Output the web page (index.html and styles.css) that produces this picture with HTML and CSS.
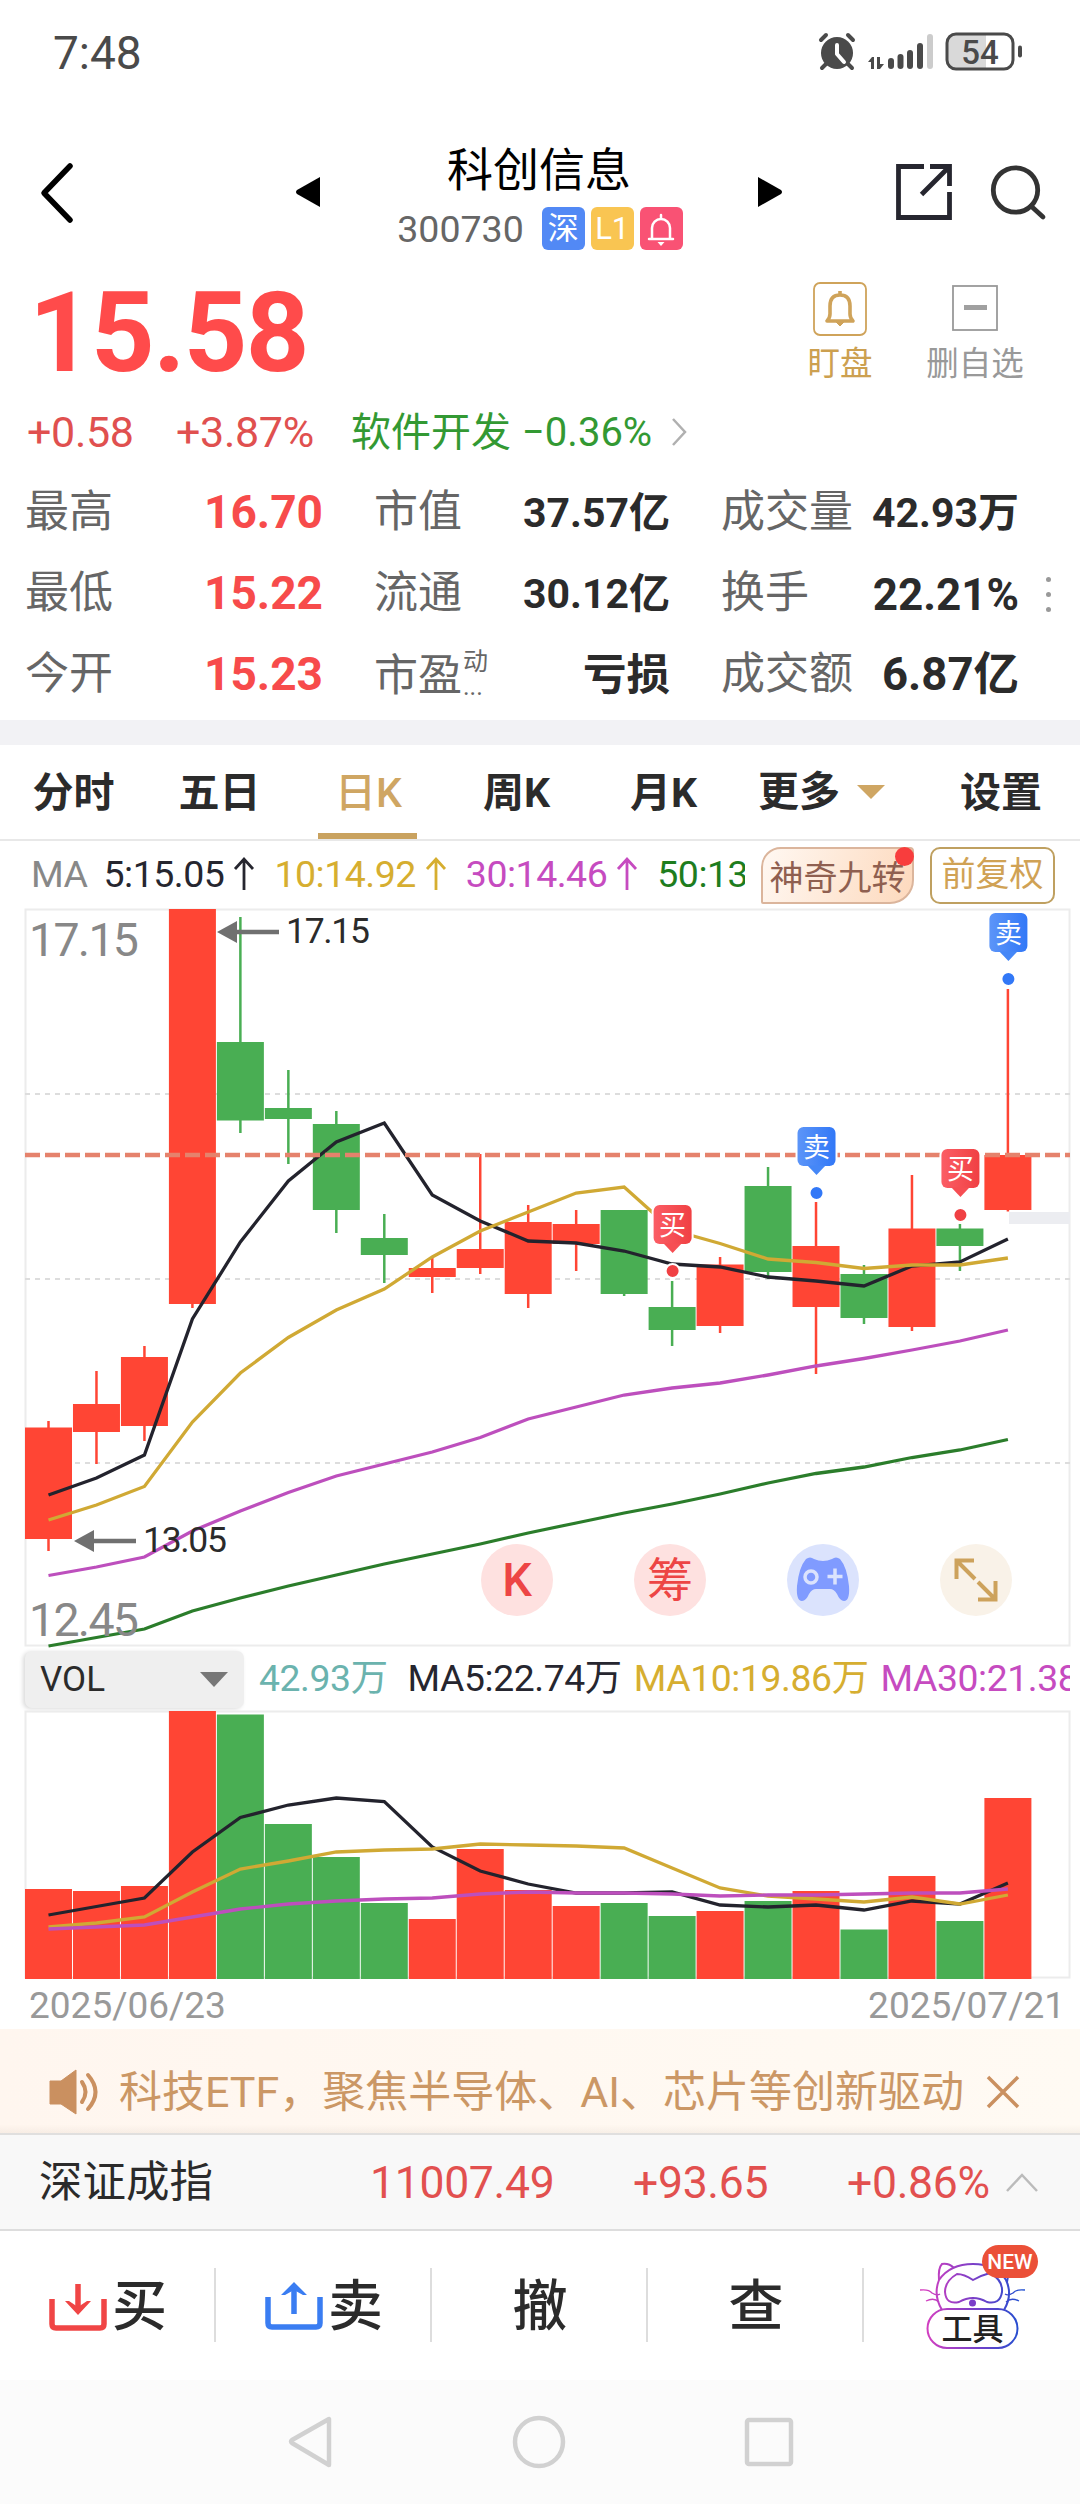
FILE: index.html
```html
<!DOCTYPE html>
<html lang="zh-CN">
<head>
  <meta charset="UTF-8" />
  <meta name="viewport" content="width=device-width, initial-scale=1.0" />
  <title>科创信息 300730</title>
  <link rel="stylesheet" href="styles.css">
</head>
<body>
  <div class="status-bar">
    <span class="clock">7:48</span>
    <svg class="status-icons" width="210" height="50" viewBox="0 0 210 50">
      <g stroke="#4a4a4a" stroke-width="4" stroke-linecap="round" fill="none">
        <path d="M11 12l5-5M38 7l5 5M17 35l-5 5M37 35l5 5"/>
      </g>
      <circle cx="27" cy="25" r="16" fill="#4a4a4a"/>
      <path d="M27 17v9l7 8" stroke="#fff" stroke-width="4" stroke-linecap="round" stroke-linejoin="round" fill="none"/>
      <path d="M58 34l4-5h2v12h-3v-7zM67 29h3v7h4l-4 5h-3z" fill="#4a4a4a"/>
      <g fill="#4a4a4a">
        <rect x="78" y="30" width="6" height="11" rx="3"/>
        <rect x="87.500" y="26" width="6" height="15" rx="3"/>
        <rect x="97" y="22" width="6" height="19" rx="3"/>
        <rect x="107" y="15" width="6" height="26" rx="3"/>
        <rect x="117" y="6" width="6" height="35" rx="3" fill="#ccc"/>
      </g>
      <path d="M145 6h31v35h-31q-8 0-8-8v-19q0-8 8-8z" fill="#d9d9d9"/>
      <rect x="137" y="6" width="66" height="35" rx="9" fill="none" stroke="#4a4a4a" stroke-width="3"/>
      <rect x="208" y="17.500" width="4" height="12" rx="2" fill="#4a4a4a"/>
      <text x="170" y="36" class="battery-text">54</text>
    </svg>
  </div>

  <header class="app-header">
    <svg class="back" width="40" height="64" viewBox="0 0 40 64"><path d="M34 6L8 33l26 27" fill="none" stroke="#000" stroke-width="5.500" stroke-linecap="round" stroke-linejoin="round"/></svg>
    <svg class="tri" width="24" height="30" viewBox="0 0 24 30"><path d="M24 0v30L1 17q-2-2 0-4z"/></svg>
    <div class="title-block">
      <h1>科创信息</h1>
      <div class="code-row">
        <span class="code">300730</span>
        <i class="tag tag-blue">深</i>
        <i class="tag tag-gold">L1</i>
        <i class="tag tag-pink">
          <svg width="32" height="36" viewBox="0 0 32 36"><path d="M16 4v3M4 28h24M7 27V17a9 9 0 0 1 18 0v10" fill="none" stroke="#fff" stroke-width="2.500" stroke-linecap="round"/><path d="M12.500 31h7l-3.500 4z" fill="#fff"/></svg>
        </i>
      </div>
    </div>
    <svg class="tri" width="24" height="30" viewBox="0 0 24 30"><path d="M0 0v30l23-13q2-2 0-4z"/></svg>
    <div class="header-icons">
      <svg width="56" height="56" viewBox="0 0 56 56" fill="none" stroke="#26262f" stroke-width="4.800"><path d="M28 2.500H2.500v51h51V28M34 2.500h19.500V22M52 4L25.500 30.500"/></svg>
      <svg width="56" height="56" viewBox="0 0 56 56" fill="none" stroke="#333" stroke-width="4.800"><circle cx="25.500" cy="26" r="22.200"/><path d="M41 42l12 11" stroke-linecap="round"/></svg>
    </div>
  </header>

  <section class="quote">
    <div class="price-row">
      <div class="price">15.58</div>
      <div class="action watch">
        <svg width="54" height="54" viewBox="0 0 54 54" fill="none" stroke="#cfa35a"><rect x="1" y="1" width="52" height="52" rx="6" stroke-width="1.800"/><path d="M27 9v3M14 39q3-3 3-7v-8q0-11 10-11t10 11v8q0 4 3 7z" stroke-width="3.600" stroke-linejoin="round"/><path d="M23 40h8l-4 4z" fill="#cfa35a" stroke-width="1"/></svg>
        <span>盯盘</span>
      </div>
      <div class="action remove">
        <svg width="46" height="54" viewBox="0 0 46 54"><rect x="1" y="4" width="44" height="44" fill="none" stroke="#999" stroke-width="1.800"/><path d="M12 25.500h23" stroke="#a0a0a0" stroke-width="5"/></svg>
        <span>删自选</span>
      </div>
    </div>
    <div class="change-row">
      <span class="up">+0.58</span>
      <span class="up pct">+3.87%</span>
      <span class="sector">软件开发</span>
      <span class="sector-pct">−0.36%</span>
      <svg width="18" height="30" viewBox="0 0 18 30"><path d="M3 2l12 13L3 28" fill="none" stroke="#b0b0b0" stroke-width="2.500"/></svg>
    </div>
    <div class="stats-wrap">
      <div class="stats">
        <div class="stat"><span>最高</span><b class="red">16.70</b></div>
        <div class="stat"><span>市值</span><b>37.57亿</b></div>
        <div class="stat"><span>成交量</span><b>42.93万</b></div>
        <div class="stat"><span>最低</span><b class="red">15.22</b></div>
        <div class="stat"><span>流通</span><b>30.12亿</b></div>
        <div class="stat"><span>换手</span><b class="pct-val">22.21%</b></div>
        <div class="stat"><span>今开</span><b class="red">15.23</b></div>
        <div class="stat"><span class="pe">市盈<em><small>动</small><small>...</small></em></span><b class="cjk">亏损</b></div>
        <div class="stat"><span>成交额</span><b class="big">6.87亿</b></div>
      </div>
      <div class="dots"><i></i><i></i><i></i></div>
    </div>
  </section>

  <nav class="tabs">
    <a>分时</a>
    <a>五日</a>
    <a class="active">日K</a>
    <a>周K</a>
    <a>月K</a>
    <a class="more">更多<i></i></a>
    <a>设置</a>
  </nav>

  <div class="ma-row">
    <div class="ma-list">
      <span class="c-gray">MA</span>
      <span class="c-black">5:15.05<svg width="22" height="34" viewBox="0 0 22 34"><path d="M11 33V3M2 12l9-10 9 10"/></svg></span>
      <span class="c-gold">10:14.92<svg width="22" height="34" viewBox="0 0 22 34"><path d="M11 33V3M2 12l9-10 9 10"/></svg></span>
      <span class="c-purple">30:14.46<svg width="22" height="34" viewBox="0 0 22 34"><path d="M11 33V3M2 12l9-10 9 10"/></svg></span>
      <span class="c-green">50:13</span>
    </div>
    <div class="chip nine">神奇九转</div>
    <div class="chip adjust">前复权</div>
  </div>

  <div class="chart-box">
    <svg id="kline" width="1080" height="740" viewBox="0 908 1080 740"></svg>
    <div class="float-buttons">
      <span class="fb red-fb">K</span>
      <span class="fb red-fb chip-fb">筹</span>
      <span class="fb blue-fb">
        <svg width="54" height="48" viewBox="0 0 54 48"><path d="M10 3q4-3 8 0 9 4 18 0 4-3 8 0 7 8 9 27 1 15-5 15-4 0-7-7-3-5-7-5H20q-4 0-7 5-3 7-7 7-6 0-5-15Q3 11 10 3z" fill="#809bff"/><circle cx="15" cy="21" r="6" fill="none" stroke="#dbe3fd" stroke-width="3.500"/><path d="M39 12.500v16M31.500 20.500h15" stroke="#dbe3fd" stroke-width="3.500"/></svg>
      </span>
      <span class="fb gold-fb">
        <svg width="46" height="46" viewBox="0 0 46 46" fill="none" stroke="#cda25c" stroke-width="4"><path d="M3.500 22V3.500H21M4 4l18 18M25 25l17 17M42.500 24v18.500H25"/></svg>
      </span>
    </div>
  </div>

  <div class="vol-row">
    <div class="vol-select">VOL<i></i></div>
    <div class="vol-list">
      <span class="c-teal">42.93万</span>
      <span class="c-black">MA5:22.74万</span>
      <span class="c-gold">MA10:19.86万</span>
      <span class="c-purple">MA30:21.38</span>
    </div>
  </div>
  <svg id="volume" width="1080" height="270" viewBox="0 1710 1080 270"></svg>
  <div class="dates"><span>2025/06/23</span><span>2025/07/21</span></div>

  <div class="notice">
    <svg width="54" height="48" viewBox="0 0 54 48"><path d="M1 13h11L27 2v44L12 36H1z" fill="#ca9060" stroke="#ca9060" stroke-linejoin="round"/><path d="M33 14q7 10 0 20M39 7q15 17 0 34" fill="none" stroke="#ca9060" stroke-width="4" stroke-linecap="round"/></svg>
    <span>科技ETF，聚焦半导体、AI、芯片等创新驱动</span>
    <svg class="close" width="34" height="34" viewBox="0 0 34 34"><path d="M2 2l30 30M32 2L2 32" stroke="#ca9060" stroke-width="3.500"/></svg>
  </div>

  <div class="index-bar">
    <span class="index-name">深证成指</span>
    <span class="index-val">11007.49</span>
    <span class="index-diff">+93.65</span>
    <span class="index-pct">+0.86%</span>
    <svg width="34" height="20" viewBox="0 0 34 20"><path d="M2 18L17 2l15 16" fill="none" stroke="#bbb" stroke-width="2.500"/></svg>
  </div>

  <div class="trade-bar">
    <div class="trade">
      <svg width="58" height="52" viewBox="0 0 58 52" fill="none" stroke="#f04545" stroke-width="5.500"><path d="M3 18v25q0 4 4 4h44q4 0 4-4V18"/><path d="M29 3v26"/><path d="M16 20h4l9 6 9-6h4L29 34z" fill="#f04545" stroke="none"/></svg>买
    </div>
    <div class="trade">
      <svg width="58" height="52" viewBox="0 0 58 52" fill="none" stroke="#3a7df2" stroke-width="5.500"><path d="M3 16v26q0 4 4 4h44q4 0 4-4V16"/><path d="M29 33V6"/><path d="M16 14L29 1l13 13h-4l-9-5-9 5z" fill="#3a7df2" stroke="none"/></svg>卖
    </div>
    <div class="trade">撤</div>
    <div class="trade">查</div>
    <div class="trade">
      <svg class="cat" width="124" height="110" viewBox="0 0 124 110">
        <defs>
          <linearGradient id="catLine" gradientUnits="userSpaceOnUse" x1="8" y1="0" x2="104" y2="0">
            <stop offset="0" stop-color="#d43fc0"/><stop offset=".5" stop-color="#7a3fc8"/><stop offset="1" stop-color="#1f4fd0"/>
          </linearGradient>
        </defs>
        <g fill="none" stroke="url(#catLine)" stroke-width="2">
          <path d="M21 34q-1-12 3-16 7-1 12 4M77 23q8-6 12-3 2 7 0 16"/>
          <path d="M24 64q-9-15-3-30 11-16 34-16t33 16q7 15-2 30"/>
          <path d="M39 28q-12 7-12 18 1 13 14 10 14-8 28 0 13 3 15-10 1-12-12-19-8 2-17 7-9-6-16-6z"/>
          <path d="M2 44q9-1 12 3 5 3 8 1M8 55q8-4 13 1M107 44q-9-1-12 3-5 3-8 1M101 55q-8-4-13 1" stroke-width="1.300"/>
          <rect x="9.500" y="63" width="90" height="39" rx="19.500" fill="#fff"/>
        </g>
        <circle cx="54.500" cy="57" r="3.500" fill="#7a3fc8"/>
        <text x="54.500" y="94" class="cat-text">工具</text>
        <rect x="64" y="-1" width="56" height="33" rx="16.500" fill="#eb5038"/>
        <text x="92" y="23" class="new-text">NEW</text>
      </svg>
    </div>
  </div>

  <div class="nav-bar">
    <svg width="48" height="54" viewBox="0 0 48 54"><path d="M43 4v46L6 28q-2-1.500 0-3z"/></svg>
    <svg width="54" height="54" viewBox="0 0 54 54"><circle cx="27" cy="27" r="24"/></svg>
    <svg width="50" height="54" viewBox="0 0 50 54"><rect x="3" y="5" width="44" height="44" rx="2"/></svg>
  </div>

<script>
const RED = '#ff4534', GREEN = '#49ae53';
const STEP = 47.97, LEFT = 25, BAR = 47;
const midX = i => LEFT + 23.5 + STEP * i;

// color, body top, body bottom, high, low, volume top
const candles = [
  ['r', 1427.5, 1539, 1421, 1551, 1889],
  ['r', 1404, 1432, 1371, 1464, 1891],
  ['r', 1357, 1426, 1346, 1441, 1886],
  ['r', 909, 1304, 909, 1308, 1711],
  ['g', 1042, 1120.5, 917, 1133, 1714.5],
  ['g', 1108, 1119, 1070, 1164, 1824],
  ['g', 1124, 1210, 1111, 1233, 1857],
  ['g', 1238, 1255, 1214, 1283, 1903],
  ['r', 1268, 1277, 1257, 1293, 1919],
  ['r', 1249, 1268, 1154, 1274, 1849],
  ['r', 1222, 1294, 1205, 1308, 1890],
  ['r', 1224, 1244, 1210, 1271, 1906],
  ['g', 1210, 1294, 1210, 1296, 1903],
  ['g', 1307, 1330, 1281, 1346, 1916],
  ['r', 1264.5, 1326, 1257, 1333, 1911],
  ['g', 1186, 1272, 1167, 1279, 1901],
  ['r', 1246, 1307, 1202, 1374, 1891],
  ['g', 1274, 1318, 1265, 1324, 1929.5],
  ['r', 1228.5, 1327, 1175, 1331, 1876],
  ['g', 1228.5, 1246, 1224, 1271, 1921],
  ['r', 1155, 1210, 989, 1211.5, 1798]
];

const priceLines = {
  '#23232d': [1495, 1478, 1455, 1319, 1242, 1181, 1142, 1123, 1195, 1221, 1241, 1243, 1251, 1264, 1267, 1277, 1281, 1286, 1266, 1262, 1239],
  '#d0a934': [1520, 1505, 1486.5, 1422, 1373, 1337.5, 1310, 1289, 1257, 1231, 1212, 1193, 1187, 1230, 1243.5, 1259, 1262.5, 1268.5, 1265, 1265, 1258],
  '#bd4fbd': [1575.5, 1567, 1557, 1531, 1511, 1492.5, 1476, 1464, 1452, 1437.5, 1419, 1407, 1395, 1388, 1383, 1375, 1366, 1358.5, 1350, 1341, 1330],
  '#2b7d2b': [1646, 1637.5, 1629, 1611, 1598, 1586, 1575, 1564, 1554, 1544, 1533, 1523, 1513, 1504, 1494, 1483, 1473.5, 1467, 1457.5, 1450, 1439.5]
};
const volLines = {
  '#23232d': [1915, 1906.5, 1898, 1852, 1817.5, 1805, 1798, 1801.5, 1847, 1871, 1884, 1893, 1893, 1892, 1905, 1907, 1905, 1910, 1901, 1904, 1883],
  '#d0a934': [1927, 1923, 1917, 1892, 1869, 1861, 1852, 1850, 1849, 1844, 1845, 1846, 1848, 1868, 1888, 1896, 1899, 1902, 1897, 1904, 1895],
  '#bd4fbd': [1929, 1927, 1925, 1917, 1909, 1904, 1901, 1899, 1898, 1894, 1892, 1893, 1893, 1894, 1896, 1895, 1895, 1894, 1893, 1893, 1889]
};
const marks = [[13, 1205, '买'], [16, 1127, '卖'], [19, 1149, '买'], [20, 913, '卖']];

function drawLines(set) {
  return Object.entries(set).map(([color, ys]) =>
    `<polyline class="ma-line" stroke="${color}" points="${ys.map((y, i) => midX(i) + ',' + y).join(' ')}"/>`).join('');
}

function arrow(x, y, label) {
  return `<path d="M${x} ${y}l20-11v22z" fill="#707070"/>
    <path d="M${x + 18} ${y}h44" stroke="#707070" stroke-width="4.500"/>
    <text x="${x + 69}" y="${y + 11}" class="mark-price">${label}</text>`;
}

function drawKline() {
  let s = `<defs>
    <linearGradient id="sell"><stop offset="0" stop-color="#5c95f8"/><stop offset="1" stop-color="#3278f7"/></linearGradient>
    <linearGradient id="buy"><stop offset="0" stop-color="#fb5d65"/><stop offset="1" stop-color="#f04043"/></linearGradient></defs>
    <rect x="25.5" y="909.500" width="1044" height="736" class="frame"/>`;
  for (const y of [1094, 1279, 1463]) s += `<path d="M25 ${y}H1070" class="grid-line"/>`;
  s += '<rect x="1009" y="1212" width="61" height="12" fill="#ecedf1"/>';
  candles.forEach(([c, top, bottom, high, low], i) => {
    const color = c === 'r' ? RED : GREEN;
    s += `<path d="M${midX(i)} ${high}V${low}" stroke="${color}" stroke-width="2.500"/>
      <rect x="${LEFT + STEP * i}" y="${top}" width="${BAR}" height="${bottom - top}" fill="${color}"/>`;
  });
  s += drawLines(priceLines);
  s += '<path d="M25 1155H1070" class="last-line"/>';
  s += arrow(217, 932, '17.15') + arrow(74, 1541, '13.05');
  s += '<text x="29" y="956" class="axis">17.15</text><text x="29" y="1636" class="axis">12.45</text>';
  marks.forEach(([i, y, t]) => {
    const x = midX(i) + .5, fill = t === '卖' ? 'sell' : 'buy';
    s += `<rect x="${x - 21}" y="${y - 2}" width="42" height="43" rx="8" fill="#fff"/>
      <rect x="${x - 19}" y="${y}" width="38" height="39" rx="6" fill="url(#${fill})"/>
      <path d="M${x - 9} ${y + 38.500}h18l-9 9.500z" fill="${t === '卖' ? '#4587f7' : '#f64e53'}"/>
      <circle cx="${x}" cy="${y + 66}" r="7" fill="${t === '卖' ? '#3278f7' : '#f04043'}" stroke="#fff" stroke-width="2"/>
      <text x="${x}" y="${y + 30}" class="mark-text">${t}</text>`;
  });
  document.getElementById('kline').innerHTML = s;
}

function drawVolume() {
  let s = '<rect x="25.5" y="1711.500" width="1044" height="266" class="frame"/>';
  candles.forEach((k, i) => {
    s += `<rect x="${LEFT + STEP * i}" y="${k[5]}" width="${BAR}" height="${1979 - k[5]}" fill="${k[0] === 'r' ? RED : GREEN}"/>`;
  });
  document.getElementById('volume').innerHTML = s + drawLines(volLines);
}

drawKline();
drawVolume();
</script>
</body>
</html>
```
FILE: styles.css
```css
*,*::before,*::after{box-sizing:border-box;margin:0;padding:0}
body{
  width:1080px;height:2504px;overflow:hidden;background:#fff;color:#2b2b2b;
  font-family:Roboto,"Noto Sans CJK SC",sans-serif;
}
svg{display:block;flex:none;overflow:visible}
i,em{font-style:normal}

.status-bar{height:110px;display:flex;justify-content:space-between;padding:28px 60px 0 53px}
.clock{font-size:46px;line-height:50px;color:#4a4a4a}
.battery-text{font-size:33px;font-weight:500;fill:#4a4a4a;text-anchor:middle}

.app-header{height:158px;display:grid;grid-template-columns:260px 96px 368px 92px 1fr;align-items:center;padding-top:5px}
.back{margin-left:36px}
.tri{justify-self:center}
.title-block{display:flex;flex-direction:column;align-items:center;padding-top:10px}
.title-block h1{font-size:46px;font-weight:400;line-height:64px;color:#000;margin-left:-2px}
.code-row{display:flex;align-items:center;gap:6px;line-height:54px}
.code{font-size:37.5px;color:#666;margin-right:12px}
.tag{width:43px;height:43px;border-radius:6px;color:#fff;font-size:31px;line-height:43px;display:flex;align-items:center;justify-content:center}
.tag-blue{background:#5289f5}
.tag-gold{background:#f9c552}
.tag-pink{background:#f95274}
.header-icons{display:flex;gap:38px;padding-left:80px}

.quote{height:452px}
.price-row{height:132px;display:flex}
.price{width:806px;padding-left:29px;font-size:111px;line-height:130px;font-weight:700;letter-spacing:-1.6px;color:#ff4b4b}
.action{display:flex;flex-direction:column;align-items:center;padding-top:14px;font-size:32.500px;line-height:48px}
.action span{margin-top:4px}
.watch{width:68px;color:#cca050}
.remove{width:100px;margin-left:51px;color:#999}
.change-row{height:70px;display:flex;align-items:center;padding:0 0 7px 27px;font-size:43px;line-height:60px}
.up{width:149px;letter-spacing:-.3px;color:#e0504f}
.up.pct{width:175px}
.sector{width:171px;font-size:40px;padding-top:2px;color:#393}
.sector-pct{width:148px;font-size:40px;padding-top:2px;color:#393}
.stats-wrap{position:relative}
.stats{padding:2px 0 0 25px;display:grid;grid-template-columns:298px 296px 298px;column-gap:51px;grid-auto-rows:81px}
.stat{display:flex;justify-content:space-between;align-items:center;line-height:81px;white-space:nowrap}
.stat span{font-size:44px;color:#666}
.stat b{font-size:41px;padding-top:2px}
.stat b.red{font-size:46px;padding-top:0;color:#f74b4b}
.stat b.pct-val{font-size:44px;padding-top:4px}
.stat b.cjk{font-size:43.5px}
.stat b.big{font-size:45.5px;padding-top:0}
.pe{display:flex;padding-top:4px}
.pe em{display:flex;flex-direction:column;padding:13px 0 0 1px}
.pe small{font-size:25px;line-height:25px}
.dots{position:absolute;right:29px;top:107px;display:flex;flex-direction:column;gap:10px}
.dots i{width:5px;height:5px;border-radius:50%;background:#999}

.tabs{height:121px;border-top:25px solid #f2f2f5;border-bottom:2px solid #e8e8e8;display:flex;line-height:96px;font-size:41px;font-weight:700;white-space:nowrap}
.tabs a{position:relative;width:147px;text-align:center}
.tabs a:nth-child(2){width:145px}
.tabs a:nth-child(3){width:153px}
.tabs a:nth-child(4){width:143px}
.tabs a:nth-child(5){width:151px}
.tabs .active{color:#cfa663;font-weight:500}
.tabs .active::after{content:"";position:absolute;left:26px;bottom:0;width:99px;height:6px;background:#c9a25f}
.tabs .more{width:174px;display:flex;align-items:center;padding-left:19px}
.tabs .more i{margin-left:17px;border:14px solid transparent;border-top-color:#cfa663;border-bottom:0}
.tabs a:last-child{width:auto;margin-left:47px}

.ma-row{height:67px;padding:6px 0 0 31px;display:flex}
.ma-list{width:714px;overflow:hidden;display:flex;font-size:37.5px;letter-spacing:-.5px;line-height:54px;height:54px;white-space:nowrap}
.ma-list span{display:flex;align-items:center;margin-right:19px}
.ma-list span:first-child{margin-right:16px}
.ma-list svg{margin-left:9px;fill:none;stroke:currentColor;stroke-width:2.800}
.c-gray{color:#888}
.c-black{color:#26262f}
.c-gold{color:#d6ae30}
.c-purple{color:#c64bc0}
.c-green{color:#1e7d1e}
.c-teal{color:#6bb3ae}
.chip{position:relative;height:57px;font-size:34px;line-height:58px;text-align:center;white-space:nowrap}
.nine{margin-left:16px;width:153px;color:#8f5f50;border:2px solid #dbb59c;border-radius:20px 4px 24px 2px;background:linear-gradient(110deg,#fff8f2,#fdd9bd)}
.nine::after{content:"";position:absolute;right:-2px;top:-2px;width:19px;height:19px;border-radius:50%;background:#f83d3d}
.adjust{margin-left:16px;width:125px;line-height:50px;color:#d0a255;border:2.500px solid #bfa060;border-radius:10px}

.chart-box{position:relative;height:740px}
.frame{fill:none;stroke:#ececec;stroke-width:2}
.grid-line{stroke:#ddd;stroke-width:2;stroke-dasharray:5 5}
.last-line{stroke:#e5826c;stroke-width:4.500;stroke-dasharray:15 5}
.ma-line{fill:none;stroke-width:3.300}
.axis{font-size:46.500px;letter-spacing:-1.700px;fill:#888}
.mark-price{font-size:35.500px;letter-spacing:-1.300px;fill:#2b2b2b}
.mark-text{font-size:27px;fill:#fff;text-anchor:middle}
.float-buttons{position:absolute;left:481px;top:636px;display:flex;gap:81px}
.fb{width:72px;height:72px;border-radius:50%;display:flex;align-items:center;justify-content:center;font-size:47px;line-height:72px}
.red-fb{background:#fee1e0;color:#ed4545;font-weight:500}
.chip-fb{font-size:46px;font-weight:400;line-height:76px}
.blue-fb{background:#dbe3fd}
.gold-fb{background:#f9f2e8}

.vol-row{height:62px;padding:3px 10px 0 25px;display:flex}
.vol-select{width:219px;height:57px;flex:none;padding:0 16px 0 15px;display:flex;align-items:center;justify-content:space-between;font-size:35px;line-height:60px;background:#efefef;border-radius:7px;box-shadow:-2px 1px 4px rgba(0,0,0,.15)}
.vol-select i{border:14px solid transparent;border-top:15px solid #777;border-bottom:0}
.vol-list{overflow:hidden;display:flex;gap:20px;padding-left:15px;font-size:37.300px;letter-spacing:-.400px;line-height:55px;white-space:nowrap}
.vol-list span + span + span{margin-left:-8px}
.dates{height:49px;display:flex;justify-content:space-between;padding:0 15px 0 29px;font-size:37px;line-height:52px;color:#999}

.notice{height:104px;display:flex;align-items:center;padding:22px 0 0 49px;background:linear-gradient(transparent 92%,rgba(120,90,60,.06)),linear-gradient(90deg,#fff6ef,#fffaf3);font-size:43px;line-height:60px;color:#cb9765;white-space:nowrap}
.notice span{width:867px;margin-left:16px}
.index-bar{height:98px;display:flex;align-items:center;padding-left:39px;background:#f8f8f8;border-top:2px solid #e0dfde;border-bottom:2px solid #ddd;font-size:44.500px;line-height:94px;padding-top:2px;color:#e2504f}
.index-name{width:331px;font-size:43.5px;color:#2b2b2b}
.index-val{width:263px;letter-spacing:-.3px}
.index-diff{width:214px;letter-spacing:-.3px}
.index-pct{width:158px;letter-spacing:-.3px}

.trade-bar{height:149px;display:flex}
.trade{position:relative;width:216px;height:149px;display:flex;align-items:center;justify-content:center;gap:5px;font-size:55px;font-weight:500;line-height:149px;padding-top:2px}
.trade + .trade::before{content:"";position:absolute;left:-2px;top:37px;width:2px;height:74px;background:#ddd}
.cat{margin:0 0 12px 15px}
.cat-text{font-size:31px;font-weight:500;fill:#222;text-anchor:middle}
.new-text{font-size:21px;fill:#fff;text-anchor:middle}

.nav-bar{height:124px;background:#fbfbfb;display:flex;justify-content:center;align-items:center;gap:178px}
.nav-bar svg{fill:none;stroke:#d1d1d1;stroke-width:4.500;stroke-linejoin:round}
```
